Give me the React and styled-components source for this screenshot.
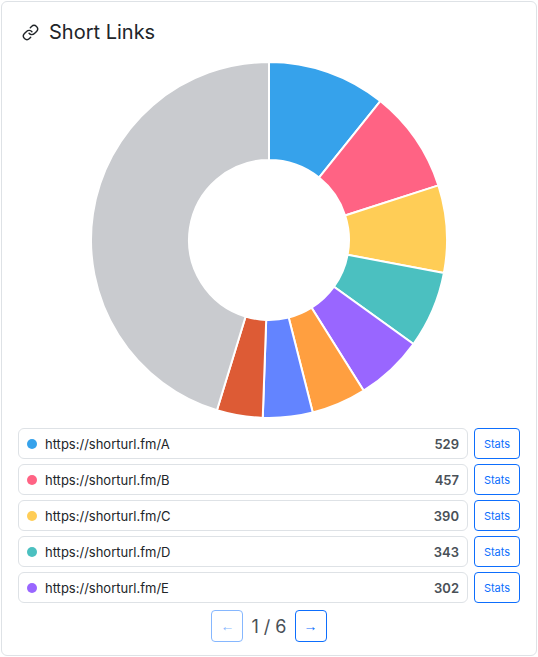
import React from 'react';
import styled, { createGlobalStyle } from 'styled-components';

const Global = createGlobalStyle`
  body { margin: 0; font-family: Inter, "Noto Sans", sans-serif; background: #fff; }
`;

const Card = styled.div`
  box-sizing: border-box;
  width: 536px;
  height: 655px;
  margin: 1px;
  border: 1px solid #dee2e6;
  border-radius: 6px;
  padding: 16px 16px 0;
  display: flex;
  flex-direction: column;
`;

const Header = styled.div`
  display: flex;
  align-items: center;
  gap: 10px;
  padding-left: 4px;
  font-size: 20px;
  color: #212529;
  height: 28px;
`;

const ChartWrap = styled.div`
  display: flex;
  justify-content: center;
  margin-top: 15px;
`;

const List = styled.div`
  display: flex;
  flex-direction: column;
  gap: 5px;
  margin-top: 9px;
`;

const Row = styled.div`
  display: flex;
  gap: 6px;
  align-items: center;
`;

const Item = styled.div`
  flex: 1;
  box-sizing: border-box;
  height: 31px;
  border: 1px solid #dee2e6;
  border-radius: 6px;
  display: flex;
  align-items: center;
  padding: 0 8px;
  font-size: 13px;
  color: #212529;
`;

const Dot = styled.span`
  width: 10px;
  height: 10px;
  border-radius: 50%;
  background: ${p => p.$c};
  margin-right: 8px;
`;

const Count = styled.span`
  margin-left: auto;
  font-weight: 600;
  color: #495057;
`;

const StatsBtn = styled.button`
  width: 46px;
  height: 31px;
  border: 1px solid #0d6efd;
  border-radius: 4px;
  background: #fff;
  color: #0d6efd;
  font-size: 11px;
  font-family: inherit;
  padding: 0;
`;

const Pager = styled.div`
  display: flex;
  justify-content: center;
  align-items: center;
  gap: 8px;
  margin-top: 7px;
  font-size: 18px;
  color: #495057;
`;

const PageBtn = styled.button`
  width: 32px;
  height: 32px;
  border: 1px solid ${p => (p.$disabled ? '#86b7fe' : '#0d6efd')};
  border-radius: 4px;
  background: #fff;
  color: ${p => (p.$disabled ? '#86b7fe' : '#0d6efd')};
  font-size: 14px;
  padding: 0;
`;

const links = [
  { u: 'A', n: 529, c: '#36a2eb' },
  { u: 'B', n: 457, c: '#ff6384' },
  { u: 'C', n: 390, c: '#ffcd56' },
  { u: 'D', n: 343, c: '#4bc0c0' },
  { u: 'E', n: 302, c: '#9966ff' },
];
const slices = [
  ...links,
  { n: 245, c: '#ff9f40' },
  { n: 222, c: '#6384ff' },
  { n: 205, c: '#dd5b35' },
  { n: 2228, c: '#c9cbcf' },
];

function Donut() {
  const total = slices.reduce((s, x) => s + x.n, 0);
  const cx = 179, cy = 179, R = 178, r = 80;
  let a = 0;
  const pt = (ang, rad) => [cx + rad * Math.sin(ang), cy - rad * Math.cos(ang)];
  return (
    <svg width="358" height="358" viewBox="0 0 358 358">
      {slices.map((s, i) => {
        const a0 = a;
        const a1 = a + (s.n / total) * Math.PI * 2;
        a = a1;
        const large = a1 - a0 > Math.PI ? 1 : 0;
        const [x0, y0] = pt(a0, R), [x1, y1] = pt(a1, R);
        const [x2, y2] = pt(a1, r), [x3, y3] = pt(a0, r);
        return (
          <path key={i} fill={s.c} stroke="#fff" strokeWidth="2"
            d={`M${x0} ${y0}A${R} ${R} 0 ${large} 1 ${x1} ${y1}L${x2} ${y2}A${r} ${r} 0 ${large} 0 ${x3} ${y3}Z`} />
        );
      })}
    </svg>
  );
}

export default function App() {
  return (
    <>
      <Global />
      <Card>
        <Header>
          <svg width="17" height="17" viewBox="0 0 24 24" fill="none" stroke="#212529" strokeWidth="2" strokeLinecap="round" strokeLinejoin="round">
            <path d="M10 13a5 5 0 0 0 7.54.54l3-3a5 5 0 0 0-7.07-7.07l-1.72 1.71" />
            <path d="M14 11a5 5 0 0 0-7.54-.54l-3 3a5 5 0 0 0 7.07 7.07l1.71-1.71" />
          </svg>
          Short Links
        </Header>
        <ChartWrap><Donut /></ChartWrap>
        <List>
          {links.map(l => (
            <Row key={l.u}>
              <Item>
                <Dot $c={l.c} />
                https://shorturl.fm/{l.u}
                <Count>{l.n}</Count>
              </Item>
              <StatsBtn>Stats</StatsBtn>
            </Row>
          ))}
        </List>
        <Pager>
          <PageBtn $disabled>←</PageBtn>
          <span>1 / 6</span>
          <PageBtn>→</PageBtn>
        </Pager>
      </Card>
    </>
  );
}
